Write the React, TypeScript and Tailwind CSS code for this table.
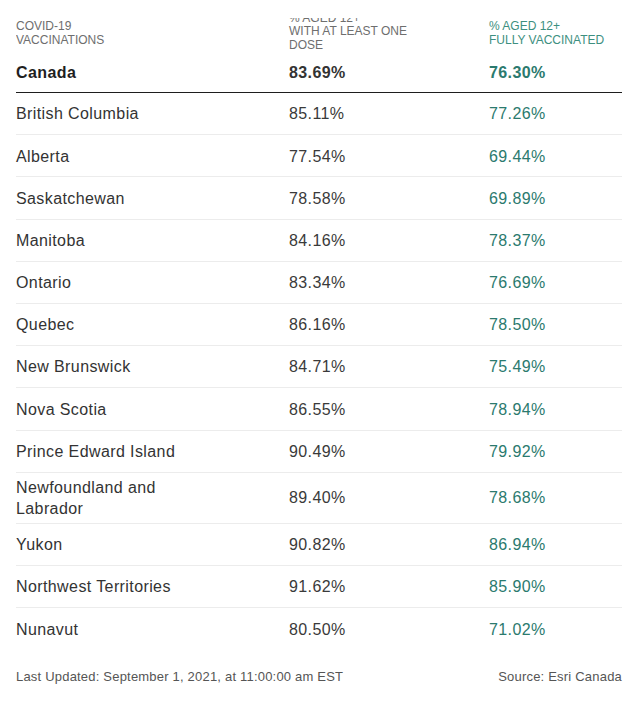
import React from "react";

const rows: [string, string, string][] = [
  ["British Columbia", "85.11%", "77.26%"],
  ["Alberta", "77.54%", "69.44%"],
  ["Saskatchewan", "78.58%", "69.89%"],
  ["Manitoba", "84.16%", "78.37%"],
  ["Ontario", "83.34%", "76.69%"],
  ["Quebec", "86.16%", "78.50%"],
  ["New Brunswick", "84.71%", "75.49%"],
  ["Nova Scotia", "86.55%", "78.94%"],
  ["Prince Edward Island", "90.49%", "79.92%"],
  ["Newfoundland and Labrador", "89.40%", "78.68%"],
  ["Yukon", "90.82%", "86.94%"],
  ["Northwest Territories", "91.62%", "85.90%"],
  ["Nunavut", "80.50%", "71.02%"],
];

export default function App() {
  return (
    <div
      className="w-[640px] h-[702px] bg-white pt-[17.5px] pl-4 pr-[18px]"
      style={{ fontFamily: '"Liberation Sans", Arial, sans-serif' }}
    >
      <div className="h-[34.5px] overflow-hidden flex items-end text-[12px] leading-[13.5px] uppercase">
        <div className="w-[273px] shrink-0 mb-[5px] text-[#6e6e6e]">
          <div>COVID-19</div>
          <div>Vaccinations</div>
        </div>
        <div className="w-[200px] shrink-0 text-[#6e6e6e]">
          <div>% Aged 12+</div>
          <div>With at least one</div>
          <div>dose</div>
        </div>
        <div className="flex-1 mb-[5px] text-[#3d8f80]">
          <div>% Aged 12+</div>
          <div>Fully vaccinated</div>
        </div>
      </div>

      <div className="grid grid-cols-[273px_200px_1fr] items-center min-h-[41px] pt-[1px] border-b border-[#1e1e1e] text-[16px] leading-[20px] tracking-[0.4px] font-bold">
        <div className="text-[#1f1f1f]">Canada</div>
        <div className="text-[#333333]">83.69%</div>
        <div className="text-[#2b7a6e]">76.30%</div>
      </div>

      {rows.map(([name, a, b], i) => (
        <div
          key={name}
          className={`grid grid-cols-[273px_200px_1fr] items-center min-h-[42.2px] pt-[5.5px] pb-[3.5px] text-[16px] leading-[20.5px] tracking-[0.4px] ${
            i < rows.length - 1 ? "border-b border-[#ececec]" : ""
          }`}
        >
          <div className="text-[#333333] pr-[90px]">{name}</div>
          <div className="text-[#3a3a3a]">{a}</div>
          <div className="text-[#2b7a6e]">{b}</div>
        </div>
      ))}

      <div className="mt-[18.5px] flex justify-between text-[13px] leading-[16px] tracking-[0.2px] text-[#555555]">
        <span>Last Updated: September 1, 2021, at 11:00:00 am EST</span>
        <span>Source: Esri Canada</span>
      </div>
    </div>
  );
}
